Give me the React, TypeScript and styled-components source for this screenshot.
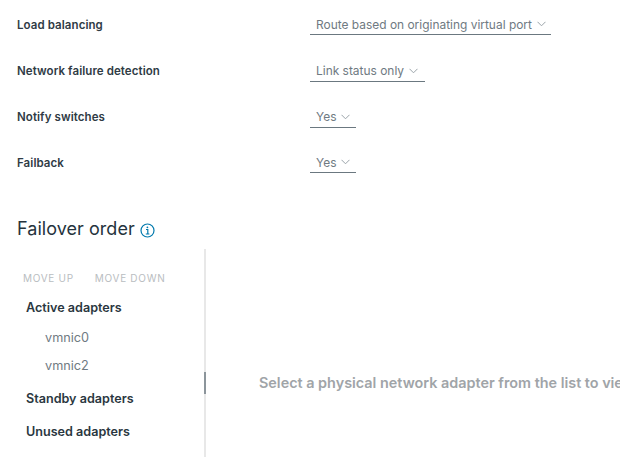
import React from "react";
import styled, { createGlobalStyle } from "styled-components";

const GlobalStyle = createGlobalStyle`
  html, body {
    margin: 0;
    padding: 0;
    background: #fff;
    overflow: hidden;
  }
  body {
    font-family: Inter, "Noto Sans", sans-serif;
  }
`;

const Page = styled.div`
  width: 620px;
  height: 457px;
  overflow: hidden;
  display: flex;
  flex-direction: column;
  padding-left: 17px;
  box-sizing: border-box;
`;

const Form = styled.div`
  display: flex;
  flex-direction: column;
  padding-top: 14px;
`;

const Row = styled.div`
  display: flex;
  align-items: flex-start;
  height: 46px;
`;

const Label = styled.div`
  width: 293px;
  font-size: 11.5px;
  font-weight: 600;
  letter-spacing: 0.08px;
  line-height: 22px;
  color: #2f3b45;
`;

const Select = styled.div<{ $width: number; $height: number }>`
  width: ${(p) => p.$width}px;
  height: ${(p) => p.$height}px;
  box-sizing: border-box;
  padding-left: 6px;
  display: flex;
  align-items: center;
  gap: 5px;
  border-bottom: 1px solid #6b7880;
  font-size: 11.95px;
  color: #6f7a82;
  white-space: nowrap;
`;

const Chevron = styled.svg`
  width: 9px;
  height: 6px;
  flex: none;
  fill: none;
  stroke: #9aa3a9;
  stroke-width: 1;
`;

const Title = styled.h2`
  margin: 18px 0 0;
  display: flex;
  align-items: center;
  gap: 5px;
  font-size: 18px;
  letter-spacing: 0.05px;
  line-height: 26px;
  font-weight: 400;
  color: #25333d;
`;

const InfoIcon = styled.svg`
  width: 15px;
  height: 15px;
  margin-top: 3px;
  fill: none;
  stroke: #0079ad;
`;

const Split = styled.div`
  flex: 1;
  display: flex;
  min-height: 0;
  margin-top: 7px;
`;

const Side = styled.div`
  position: relative;
  width: 189px;
  flex: none;
  box-sizing: border-box;
  border-right: 2px solid #e8e8e8;
`;

const ScrollThumb = styled.div`
  position: absolute;
  right: -2px;
  top: 123px;
  width: 2px;
  height: 22px;
  background: #8c959b;
`;

const Actions = styled.div`
  display: flex;
  gap: 21px;
  padding: 23px 0 0 6px;
`;

const ActionButton = styled.span`
  font-size: 10px;
  line-height: 12px;
  letter-spacing: 0.7px;
  color: #b9bdc1;
  white-space: nowrap;
`;

const Group = styled.div<{ $top: number }>`
  margin: ${(p) => p.$top}px 0 0 9px;
  font-size: 12.6px;
  line-height: 16px;
  font-weight: 600;
  color: #2a3740;
`;

const Adapter = styled.div<{ $top: number }>`
  margin: ${(p) => p.$top}px 0 0 28px;
  font-size: 12.7px;
  line-height: 16px;
  color: #6f7a82;
`;

const Detail = styled.div`
  flex: 1;
  min-width: 0;
  display: flex;
  align-items: flex-start;
  padding: 125px 0 0 53px;
  font-size: 14.4px;
  line-height: 18px;
  font-weight: 600;
  color: #a0a4a8;
  white-space: nowrap;
  overflow: hidden;
`;

const rows = [
  { label: "Load balancing", value: "Route based on originating virtual port", width: 241, height: 21 },
  { label: "Network failure detection", value: "Link status only", width: 115, height: 22 },
  { label: "Notify switches", value: "Yes", width: 46, height: 22 },
  { label: "Failback", value: "Yes", width: 46, height: 21 },
];

export default function App() {
  return (
    <Page>
      <GlobalStyle />
      <Form>
        {rows.map((r) => (
          <Row key={r.label}>
            <Label>{r.label}</Label>
            <Select $width={r.width} $height={r.height}>
              {r.value}
              <Chevron viewBox="0 0 9 6">
                <path d="M0.5 0.8 L4.5 4.8 L8.5 0.8" />
              </Chevron>
            </Select>
          </Row>
        ))}
      </Form>
      <Title>
        Failover order
        <InfoIcon viewBox="0 0 15 15">
          <circle cx="7.5" cy="7.5" r="6.5" strokeWidth="1.2" />
          <path d="M6 6.5 H7.8 V11 M5.8 11 H9.4" strokeWidth="1.2" />
          <circle cx="7.4" cy="4.3" r="0.9" fill="#0079ad" stroke="none" />
        </InfoIcon>
      </Title>
      <Split>
        <Side>
          <ScrollThumb />
          <Actions>
            <ActionButton>MOVE UP</ActionButton>
            <ActionButton>MOVE DOWN</ActionButton>
          </Actions>
          <Group $top={16}>Active adapters</Group>
          <Adapter $top={14}>vmnic0</Adapter>
          <Adapter $top={12}>vmnic2</Adapter>
          <Group $top={17}>Standby adapters</Group>
          <Group $top={17}>Unused adapters</Group>
        </Side>
        <Detail>Select a physical network adapter from the list to view its details</Detail>
      </Split>
    </Page>
  );
}
